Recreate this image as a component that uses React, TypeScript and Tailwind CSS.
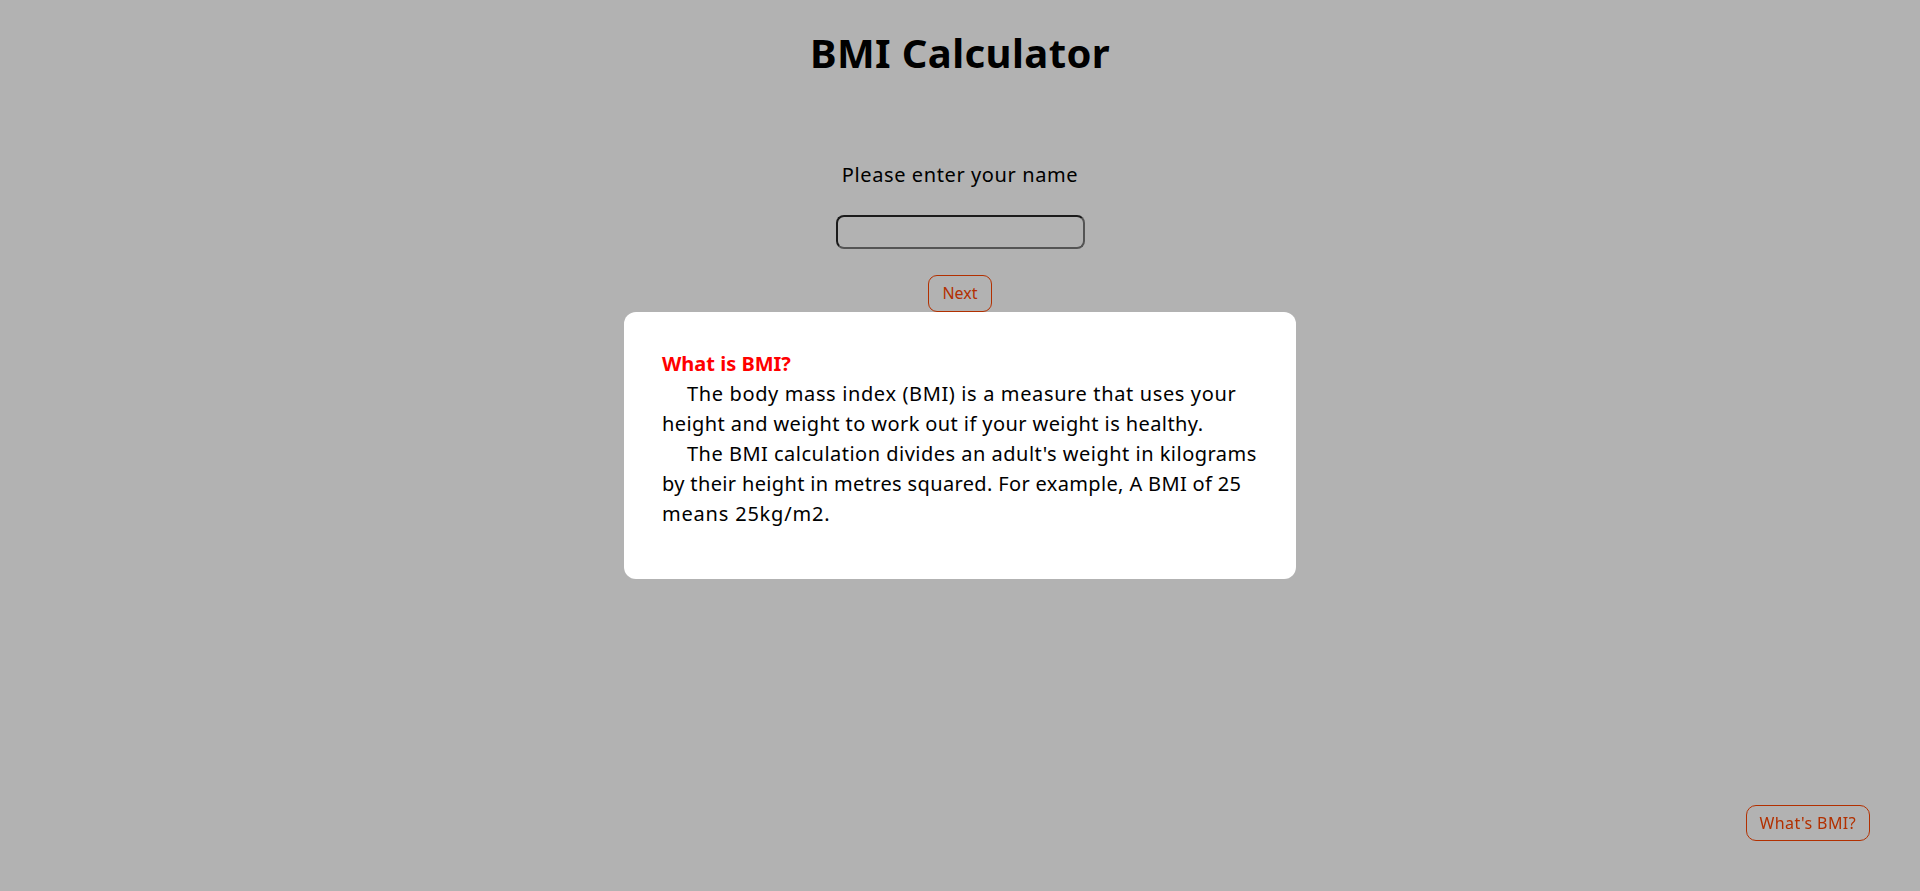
import React from "react";

export default function App() {
  return (
    <div className="relative min-h-screen w-full bg-white text-black font-['Noto_Sans',sans-serif]">
      <div className="flex flex-col items-center">
        <h1 className="mt-[29px] text-[40px] leading-[48px] font-bold tracking-[0.4px]">BMI Calculator</h1>
        <p className="mt-[83px] text-[20px] leading-[30px] tracking-[0.6px]">Please enter your name</p>
        <input
          type="text"
          className="mt-[25px] w-[249px] h-[34px] rounded-[8px] border-2 border-t-[#282828] border-l-[#282828] border-b-[#797979] border-r-[#797979] bg-white px-2 outline-none"
        />
        <button className="mt-[26px] h-[37px] px-[13.5px] rounded-[9px] border border-[#ff4500] text-[#ff4500] text-[16px] leading-[35px] bg-transparent">
          Next
        </button>
      </div>

      <button className="fixed right-[50px] bottom-[50px] h-[36px] px-[13px] rounded-[10px] border border-[#ff4500] text-[#ff4500] text-[16px] leading-[34px] tracking-[0.4px] bg-transparent">
        What's BMI?
      </button>

      <div className="fixed inset-0 z-10 flex items-center justify-center bg-black/30">
        <div className="w-[672px] rounded-[12px] bg-white pt-[37px] pb-[50px] px-[38px]">
          <div className="text-[20px] leading-[30px] font-bold text-[#ff0000]">What is BMI?</div>
          <div className="text-[20px] leading-[30px] text-black whitespace-nowrap">
            <div>
              <span className="inline-block w-[25px]"></span>
              <span className="tracking-[0.63px]">The body mass index (BMI) is a measure that uses your</span>
            </div>
            <div className="tracking-[0.41px]">height and weight to work out if your weight is healthy.</div>
            <div>
              <span className="inline-block w-[25px]"></span>
              <span className="tracking-[0.49px]">The BMI calculation divides an adult's weight in kilograms</span>
            </div>
            <div className="tracking-[0.35px]">by their height in metres squared. For example, A BMI of 25</div>
            <div className="tracking-[0.8px]">means 25kg/m2.</div>
          </div>
        </div>
      </div>
    </div>
  );
}
